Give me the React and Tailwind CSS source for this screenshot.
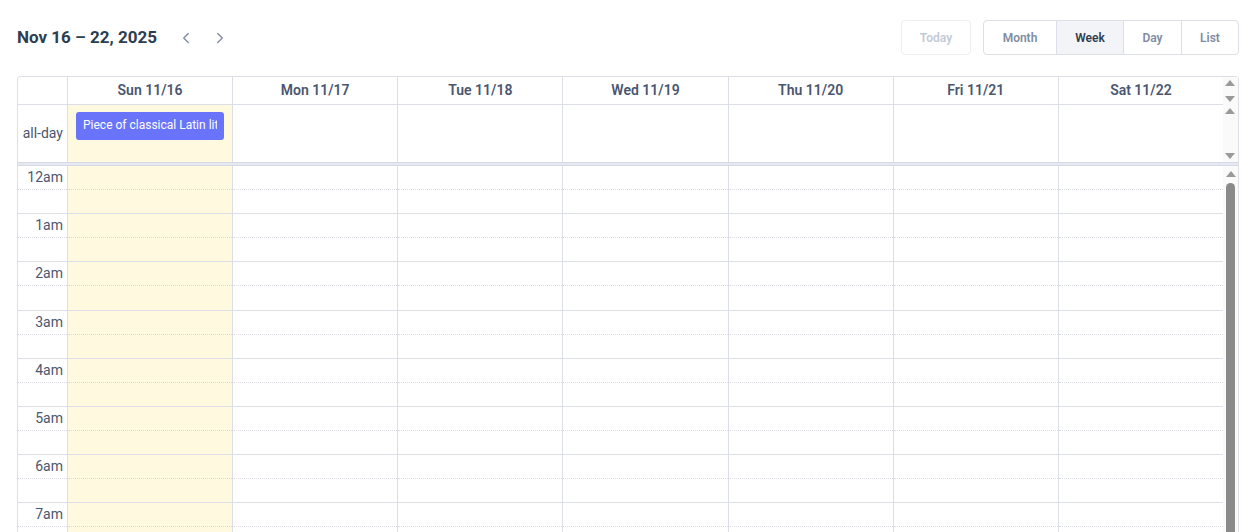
import React from 'react';
import { ChevronLeft, ChevronRight } from 'lucide-react';

const DAYS = ['Sun 11/16', 'Mon 11/17', 'Tue 11/18', 'Wed 11/19', 'Thu 11/20', 'Fri 11/21', 'Sat 11/22'];
const HOURS = Array.from({ length: 24 }, (_, i) =>
  i === 0 ? '12am' : i < 12 ? `${i}am` : i === 12 ? '12pm' : `${i - 12}pm`
);

function Up() {
  return <span className="block h-0 w-0 border-x-[5px] border-b-[6px] border-x-transparent border-b-[#9a9a9a]" />;
}

function Down() {
  return <span className="block h-0 w-0 border-x-[5px] border-t-[6px] border-x-transparent border-t-[#9a9a9a]" />;
}

export default function App() {
  return (
    <div className="h-[532px] overflow-hidden bg-white pl-[17px] pr-[10px] pt-[20px] font-['Roboto',sans-serif]">
      {/* toolbar */}
      <div className="flex h-[35px] items-center justify-between">
        <div className="flex items-center">
          <h2 className="text-[17px] font-bold text-[#2c3e50]">Nov 16 – 22, 2025</h2>
          <div className="ml-[20px] flex items-center gap-[16px] text-[#7b8aa3]">
            <button type="button" className="flex h-[28px] w-[18px] items-center justify-center">
              <ChevronLeft className="h-[18px] w-[18px]" strokeWidth={1.75} />
            </button>
            <button type="button" className="flex h-[28px] w-[18px] items-center justify-center">
              <ChevronRight className="h-[18px] w-[18px]" strokeWidth={1.75} />
            </button>
          </div>
        </div>
        <div className="flex items-center gap-[12px]">
          <button
            type="button"
            disabled
            className="h-[35px] w-[70px] rounded-[4px] border border-[#eceef3] text-[12px] font-semibold text-[#c3cad6]"
          >
            Today
          </button>
          <div className="flex h-[35px] overflow-hidden rounded-[4px] border border-[#dcdfe8] text-[12px] font-semibold">
            <button type="button" className="w-[72px] text-[#7f8ca3]">Month</button>
            <button type="button" className="w-[67px] border-l border-[#dcdfe8] bg-[#f3f4f8] text-[#2c3e50]">Week</button>
            <button type="button" className="w-[58px] border-l border-[#dcdfe8] text-[#7f8ca3]">Day</button>
            <button type="button" className="w-[57px] border-l border-[#dcdfe8] text-[#7f8ca3]">List</button>
          </div>
        </div>
      </div>

      {/* calendar */}
      <div className="mt-[21px] rounded-t-[3px] border border-[#dcdfe8] text-[#4a5670]">
        {/* header row */}
        <div className="grid h-[28px] grid-cols-[49px_repeat(7,minmax(0,1fr))_15px]">
          <div className="border-b border-[#dcdfe8]" />
          {DAYS.map((d) => (
            <div
              key={d}
              className="flex items-center justify-center border-b border-l border-[#dcdfe8] text-[14px] font-semibold"
            >
              {d}
            </div>
          ))}
          <div className="flex flex-col items-center justify-between bg-[#fafafa] py-[3px]">
            <Up />
            <Down />
          </div>
        </div>

        {/* all-day row */}
        <div className="grid h-[57px] grid-cols-[49px_repeat(7,minmax(0,1fr))_15px]">
          <div className="flex items-center justify-end pr-[4px] text-[14px]">all-day</div>
          {DAYS.map((d, i) => (
            <div key={d} className={`min-w-0 border-l border-[#dcdfe8] ${i === 0 ? 'bg-[#fffadf] px-[8px] pt-[7px]' : ''}`}>
              {i === 0 ? (
                <div className="h-[28px] rounded-[3px] bg-[#6a74fb] px-[7px] text-[12px] leading-[27px] text-white">
                  <div className="overflow-hidden whitespace-nowrap">Piece of classical Latin literature from 45 BC</div>
                </div>
              ) : null}
            </div>
          ))}
          <div className="flex flex-col items-center justify-between bg-[#fafafa] py-[3px]">
            <Up />
            <Down />
          </div>
        </div>

        {/* divider */}
        <div className="h-[4px] border-y border-[#d6dae5] bg-[#e6e9f1]" />

        {/* time grid */}
        <div className="grid grid-cols-[minmax(0,1fr)_15px]">
          <div className="grid grid-cols-[49px_repeat(7,minmax(0,1fr))]">
            <div>
              {HOURS.map((h) => (
                <div key={h}>
                  <div className="flex h-[24.1px] items-center justify-end border-b border-dotted border-[#d9dbe3] pr-[4px] text-[14px]">
                    {h}
                  </div>
                  <div className="h-[24.1px] border-b border-[#dcdfe8]" />
                </div>
              ))}
            </div>
            {DAYS.map((d, i) => (
              <div key={d} className={`border-l border-[#dcdfe8] ${i === 0 ? 'bg-[#fffadf]' : ''}`}>
                {HOURS.map((h) => (
                  <div key={h}>
                    <div className="h-[24.1px] border-b border-dotted border-[#d9dbe3]" />
                    <div className="h-[24.1px] border-b border-[#dcdfe8]" />
                  </div>
                ))}
              </div>
            ))}
          </div>
          <div className="flex flex-col items-center bg-[#fafafa] pt-[5px]">
            <Up />
            <div className="mt-[6px] h-[700px] w-[9px] rounded-t-full bg-[#8a8a8a]" />
          </div>
        </div>
      </div>
    </div>
  );
}
